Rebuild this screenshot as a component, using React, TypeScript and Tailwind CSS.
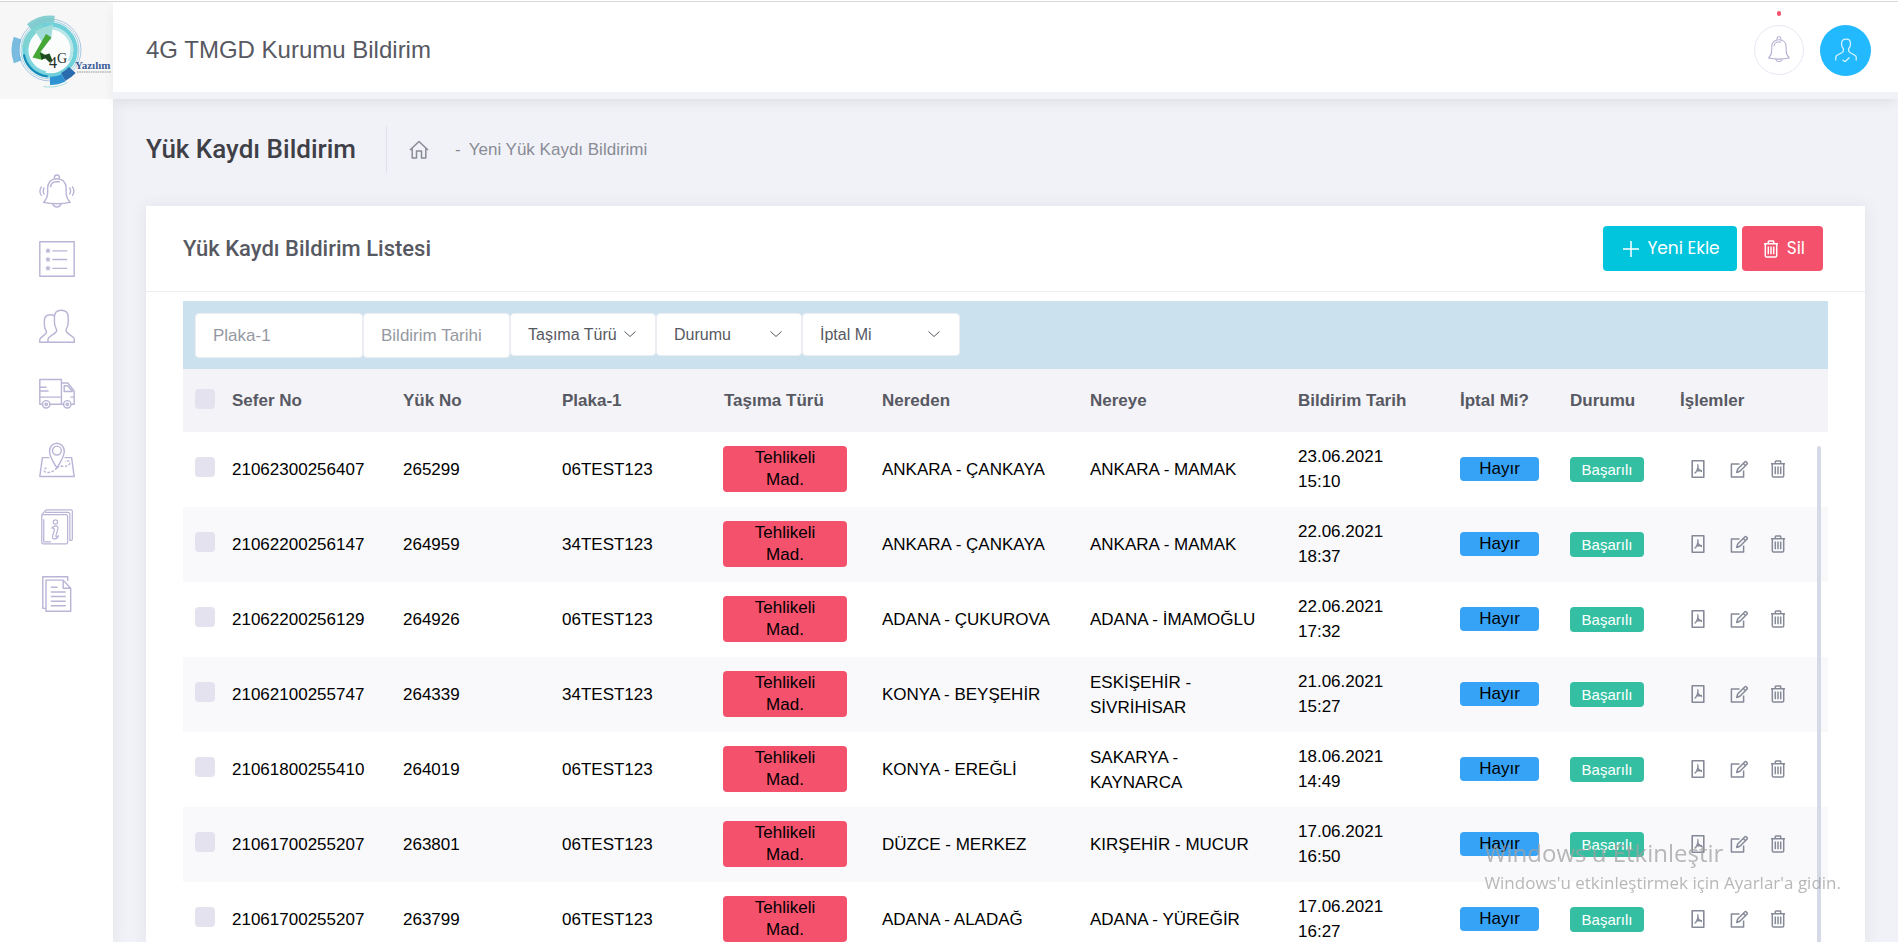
import React from "react";

type Row = {
  trip: string;
  load: string;
  plate: string;
  from: string;
  to: string;
  date: string;
  time: string;
};

const rows: Row[] = [
  { trip: "21062300256407", load: "265299", plate: "06TEST123", from: "ANKARA - ÇANKAYA", to: "ANKARA - MAMAK", date: "23.06.2021", time: "15:10" },
  { trip: "21062200256147", load: "264959", plate: "34TEST123", from: "ANKARA - ÇANKAYA", to: "ANKARA - MAMAK", date: "22.06.2021", time: "18:37" },
  { trip: "21062200256129", load: "264926", plate: "06TEST123", from: "ADANA - ÇUKUROVA", to: "ADANA - İMAMOĞLU", date: "22.06.2021", time: "17:32" },
  { trip: "21062100255747", load: "264339", plate: "34TEST123", from: "KONYA - BEYŞEHİR", to: "ESKİŞEHİR - SİVRİHİSAR", date: "21.06.2021", time: "15:27" },
  { trip: "21061800255410", load: "264019", plate: "06TEST123", from: "KONYA - EREĞLİ", to: "SAKARYA - KAYNARCA", date: "18.06.2021", time: "14:49" },
  { trip: "21061700255207", load: "263801", plate: "06TEST123", from: "DÜZCE - MERKEZ", to: "KIRŞEHİR - MUCUR", date: "17.06.2021", time: "16:50" },
  { trip: "21061700255207", load: "263799", plate: "06TEST123", from: "ADANA - ALADAĞ", to: "ADANA - YÜREĞİR", date: "17.06.2021", time: "16:27" },
];

const headings = ["Sefer No", "Yük No", "Plaka-1", "Taşıma Türü", "Nereden", "Nereye", "Bildirim Tarih", "İptal Mi?", "Durumu", "İşlemler"];

/* ---------- icons ---------- */

function Line({ size, box = 35, width = 1, children }: { size: string; box?: number; width?: number; children: React.ReactNode }) {
  return (
    <svg className={size} viewBox={`0 0 ${box} ${box}`} fill="none" stroke="currentColor" strokeWidth={width} strokeLinejoin="round" aria-hidden="true">
      {children}
    </svg>
  );
}

const bellBody = (
  <>
    <path d="M15 4.6V3.4a2.4 2.4 0 0 1 4.8 0v1.2" />
    <path d="M4.4 27.6c3.4-3.4 4-6 4-9.600V13.300C8.400 8 12 4.600 17.400 4.600S26.400 8 26.400 13.300V18c0 3.600.600 6.200 4 9.600-4.300.9-8.600 1.300-13 1.300s-8.700-.4-13-1.300Z" />
    <path d="M13.300 29.200c.7 1.900 2.200 2.800 4.100 2.800s3.400-.9 4.100-2.800" />
    <path d="M11.300 13c0-3.300 2.200-5.400 5.400-5.400h3.500" />
  </>
);

const BellRing = () => (
  <Line size="size-9" width={1.400}>
    {bellBody}
    <path d="M5.300 13.200c-1.600 1.600-1.600 5.200 0 6.800M2.700 12.200c-2.400 2.400-2.400 6.600 0 9M29.500 13.200c1.600 1.600 1.600 5.200 0 6.800M32.100 12.200c2.400 2.400 2.400 6.600 0 9" />
  </Line>
);

const ListBox = () => (
  <Line size="size-9" width={1.400}>
    <path d="M.8.800h33.400v33.400H.8zM13 9.600h14.500M13 18h14.500M13 26.600h14.500" />
    <path fill="currentColor" strokeWidth={0.500} d="m8.700 7 .7 1.500 1.700.2-1.200 1.100.3 1.600-1.500-.8-1.400.8.3-1.600-1.200-1.100 1.700-.2zM8.700 15.500l.7 1.500 1.700.2-1.200 1.100.3 1.600-1.500-.8-1.400.8.3-1.600-1.200-1.100 1.700-.2zM8.700 24.100l.7 1.500 1.700.2-1.200 1.100.3 1.600-1.500-.8-1.400.8.3-1.600-1.200-1.100 1.700-.2z" />
  </Line>
);

const Users = () => (
  <Line size="size-9" width={1.400}>
    <path d="M8.700 33.300v-2.500c0-3.500 6.700-5 8.300-8 .6-1.200 0-2.200-.6-3.200-1-1.600-1.400-3.200-1.400-6.400V8.800c0-4 2.200-6.600 6.700-6.600s6.700 2.600 6.700 6.600v4.400c0 3.200-.4 4.800-1.400 6.400-.6 1-1.200 2-.6 3.200 1.600 3 7.900 4.500 7.900 8v2.500Z" />
    <path d="M14.700 7.300c-1-.5-2.200-.7-3.400-.7-4 0-6.100 2.300-6.100 5.900v3.200c0 2.800.4 4.200 1.300 5.600.6 1 1.200 1.800.6 2.900C5.600 26.900.7 28.200.7 31.300v2h8" />
  </Line>
);

const Truck = () => (
  <Line size="size-9" width={1.400}>
    <path d="M4 28.500H.8V4.300h21v24.200M10 28.500h14M21.800 7.700H28l6.200 7.800v13h-3M.8 21.500h21M.8 12h6.500M.8 15.500h8.500M24.500 16V10.500h3.400l4.600 5.500zM30.500 21.500h3.700" />
    <circle cx="7" cy="28.500" r="3.600" />
    <circle cx="7" cy="28.500" r="1.100" />
    <circle cx="27.500" cy="28.500" r="3.600" />
    <circle cx="27.500" cy="28.500" r="1.100" />
  </Line>
);

const MapPin = () => (
  <Line size="size-9" width={1.400}>
    <path d="M17.400 25.200C14 20 10.200 13.400 10.200 9A7.200 7.800 0 0 1 24.600 9C24.600 13.400 20.800 20 17.400 25.200Z" />
    <circle cx="17.400" cy="8.300" r="4.300" />
    <path d="M10 15.200H3.300L.8 33.500h33.400l-2.500-18.300h-6.900" />
    <path strokeDasharray="2.600 1.400" d="M17.400 25.200c-2 2.200-5.500 4.600-9.400 4.600-3.600 0-4-3.800-.6-4.600M17.400 25.200c1-1.400 3-1.800 5-1.600 4 .4 7.600-.6 7.600-3.200s-3-2.300-4.600-1.400" />
  </Line>
);

const InfoBook = () => (
  <Line size="size-9" width={1.200}>
    <path d="M2.700 5.500h23.600a1.500 1.500 0 0 1 1.500 1.500v25.500a1.500 1.500 0 0 1-1.500 1.500H4.200a1.500 1.500 0 0 1-1.500-1.500ZM2.700 5.500 7 .8h24.200a1.200 1.200 0 0 1 1.200 1.200v27.500a1 1 0 0 1-1 1h-2M6 3.200h22a2 2 0 0 1 2 2V30M4.600 10v22h7" />
    <circle cx="16" cy="12.700" r="2.100" />
    <path d="M12.500 18.500c1.500-1.600 4-2.400 5.400-1.600.8.500.7 1.500.4 2.600l-1.800 6.300c-.4 1.500.6 1.600 2.300.2-.5 2-2.500 3.200-4.300 3-1.500-.2-1.600-1.500-1.200-3l1.700-5.800c.4-1.300-.9-1.300-2.500-1.700Z" />
  </Line>
);

const Documents = () => (
  <Line size="size-9" width={1.400}>
    <path d="M6.800 31.500H3.700V.8h24.200v4" />
    <path d="M6.800 4h16.700l7.300 8v22.200h-24zM23.500 4v8h7.300M11.500 11H18M11.500 15.500H26M11.500 20H26M11.500 24.500H26M11.500 29H26" />
  </Line>
);

const Trash = ({ size }: { size: string }) => (
  <Line size={size} box={18} width={1.500}>
    <path d="M2 3.700h14M6.300 3.500V1.700c0-.4.300-.7.700-.7h4c.4 0 .7.300.7.700v1.800M3.300 3.700v12c0 .8.500 1.300 1.300 1.300h8.800c.8 0 1.300-.5 1.300-1.300v-12M6.300 6.500v7.800M9 6.500v7.800M11.700 6.500v7.800" />
  </Line>
);

const Pdf = () => (
  <Line size="size-[18px]" box={18} width={1.600}>
    <path d="M3.200.8h11.600v16.400H3.200z" />
    <path strokeWidth={1.300} d="M8.300 4.500c.9 0 .9 2 .3 4S6.500 13 5.500 13.200M8.700 6c.2 2.600 1.600 4.800 4.300 5.600M6.500 11.500c2-.9 4-1.200 6.500-.9" />
  </Line>
);

const Edit = () => (
  <Line size="size-5" box={20} width={1.500}>
    <path d="M11.500 5H3.400v13h12.200v-6.600" />
    <path d="m8.700 13.500 1-3.500 7-7c.5-.5 1.200-.5 1.700 0l.5.5c.5.5.5 1.200 0 1.700l-7 7ZM15.300 4.500l2.200 2.200" />
  </Line>
);

const Plus = () => (
  <Line size="size-4" box={16} width={1.500}>
    <path d="M8 0v16M0 8h16" />
  </Line>
);

const Home = () => (
  <Line size="size-5" box={20} width={1.500}>
    <path d="M1 10 10 1.500 19 10M3.200 8.500V18h4.300v-7h5v7h4.300V8.500" />
  </Line>
);

const Chevron = () => (
  <svg className="pointer-events-none absolute top-[17px] right-5 h-2 w-3 text-[#575962]" viewBox="0 0 12 8" fill="none" stroke="currentColor" aria-hidden="true">
    <path d="m.5 1.500 5.500 5 5.500-5" />
  </svg>
);

function Arc({ r, start, len, width, color, opacity = 1 }: { r: number; start: number; len: number; width: number; color: string; opacity?: number }) {
  return (
    <circle cx="50" cy="48" r={r} fill="none" stroke={color} strokeWidth={width} strokeOpacity={opacity} pathLength={360} strokeDasharray={`${len} 360`} transform={`rotate(${start} 50 48)`} />
  );
}

const Logo = () => (
  <svg className="h-[97px] w-[113px]" viewBox="0 0 113 97" role="img" aria-label="4G Yazılım">
    <circle cx="50" cy="48" r="24" fill="#fbfdfd" />
    <Arc r={31} start={0} len={360} width={0.800} color="#7fa8cf" opacity={0.800} />
    <Arc r={29} start={0} len={360} width={0.800} color="#8cc7dc" />
    <Arc r={25.500} start={0} len={360} width={4.500} color="#6fd0da" />
    <Arc r={22} start={270} len={120} width={3} color="#b9e6e7" />
    <Arc r={23} start={100} len={130} width={3} color="#7fd6de" />
    <Arc r={26.500} start={95} len={75} width={2} color="#1287b8" />
    <Arc r={25} start={185} len={70} width={6} color="#7fd3cf" opacity={0.800} />
    <Arc r={31} start={228} len={50} width={7} color="#74c8cb" opacity={0.850} />
    <Arc r={34.500} start={160} len={40} width={8} color="#63b2dc" opacity={0.850} />
    <Arc r={30} start={42} len={22} width={9} color="#2a6cae" />
    <Arc r={31} start={64} len={26} width={8} color="#2d93d2" />
    <Arc r={37} start={62} len={38} width={1} color="#a7dfdc" />
    <path d="M35 29 53 22 51 38 46 35 42 40Z" fill="#9fdcda" />
    <path d="m46 32 5.500 3.500-11 14.500 5 3-3 5-10-2.500Z" fill="#46a636" />
    <path d="m40 50.500 4.500 2.500 5-1.500 3 7-3 2-4-4-4 1Z" fill="#1e4a22" />
    <text y="66" fill="#23302b" className="font-['Liberation_Serif',serif]">
      <tspan x="49" fontSize="16">4</tspan>
      <tspan x="57" y="61" fontSize="14">G</tspan>
    </text>
    <text x="75" y="67" fontSize="11" fontWeight="700" fill="#3c5d98" className="font-['Liberation_Serif',serif]">Yazılım</text>
    <path d="M77 70h34" stroke="#8d9a94" strokeWidth="1.200" strokeDasharray="1.600 .7" />
  </svg>
);

/* ---------- layout ---------- */

const menu = [
  { label: "Bildirimler", icon: <BellRing /> },
  { label: "Listeler", icon: <ListBox /> },
  { label: "Kullanıcılar", icon: <Users /> },
  { label: "Taşımalar", icon: <Truck /> },
  { label: "Harita", icon: <MapPin /> },
  { label: "Bilgi", icon: <InfoBook /> },
  { label: "Belgeler", icon: <Documents /> },
];

function Sidebar() {
  return (
    <aside className="z-10 flex w-[113px] shrink-0 flex-col bg-white shadow-[0_0_15px_1px_rgba(69,65,78,0.08)]">
      <a href="#" className="relative z-30 bg-[#f7f7f7]">
        <Logo />
      </a>
      <nav className="flex flex-col items-center gap-[31px] pt-[75px] text-[#b9b5d6]">
        {menu.map((m) => (
          <a key={m.label} href="#" aria-label={m.label}>
            {m.icon}
          </a>
        ))}
      </nav>
    </aside>
  );
}

function Header() {
  return (
    <header className="relative z-20 flex h-[97px] shrink-0 items-center justify-between border-b-[7px] border-[#f1f2f8] bg-white pt-[6px] pr-[27px] pl-[33px] shadow-[0_5px_12px_-3px_rgba(69,65,78,0.12)]">
      <span className="text-2xl text-[#575962]">4G TMGD Kurumu Bildirim</span>
      <div className="flex items-center gap-4">
        <button aria-label="Bildirimler" className="relative flex size-[50px] items-center justify-center rounded-full border border-[#e9e7f3] text-[#b3aed0]">
          <span className="absolute -top-[15px] left-[22px] h-[5px] w-1 rounded-full bg-[#f4516c]" />
          <Line size="size-7" width={1.300}>{bellBody}</Line>
        </button>
        <button aria-label="Profil" className="flex size-[51px] items-center justify-center rounded-full bg-[#22b9ff] text-[#d6f2ff]">
          <Line size="size-6" box={24} width={1.300}>
            <path d="M1.800 22.500v-3.200c0-.9.500-1.600 1.300-2l4.700-2.600c1-.6 1.600-1.300 1.600-2.500v-1.400C8.200 9.600 7.600 8.300 7.600 6.800V5c0-2.300 1.400-3.800 4.400-3.800S16.400 2.700 16.400 5v1.800c0 1.500-.6 2.800-1.800 4v1.400c0 1.200.6 1.900 1.600 2.500l4.700 2.600c.8.400 1.300 1.100 1.300 2v3.200M8.500 21.800l2.500 2 4.500-4.300" />
          </Line>
        </button>
      </div>
    </header>
  );
}

function Filter({ label, width }: { label: string; width: string }) {
  return (
    <div className={`relative ${width}`}>
      <select aria-label={label} className="h-[43px] w-full appearance-none rounded border border-[#ebedf2] bg-white pr-8 pl-[17px] text-base text-[#575962]">
        <option>{label}</option>
      </select>
      <Chevron />
    </div>
  );
}

const input = "h-[45px] rounded border border-[#ebedf2] bg-white px-[17px] text-[17px] text-[#575962] placeholder:text-[#9699a2]";
const check = "block size-5 appearance-none rounded bg-[#e5e2f0]";

export default function App() {
  return (
    <div className="flex h-screen overflow-hidden border-t border-white bg-[#f1f2f7] font-['Liberation_Sans',Arial,sans-serif]">
      <div className="flex min-w-0 flex-1 border-t border-[#d9dbdd]">
        <Sidebar />
        <div className="flex min-w-0 flex-1 flex-col">
          <Header />
          <main className="flex min-h-0 flex-1 flex-col px-[33px]">
            <div className="flex shrink-0 items-center pt-[27px] pb-[33px]">
              <h1 className="border-r border-[#e0e2ea] pr-[30px] font-[Roboto,sans-serif] text-[26px] leading-[47px] font-medium text-[#3f4047]">Yük Kaydı Bildirim</h1>
              <nav className="flex items-center text-[17px] text-[#898b96]">
                <a href="#" aria-label="Ana sayfa" className="ml-[22px]">
                  <Home />
                </a>
                <span className="ml-[26px]">-</span>
                <a href="#" className="ml-2">Yeni Yük Kaydı Bildirimi</a>
              </nav>
            </div>

            <section className="flex min-h-0 flex-1 flex-col bg-white shadow-[0_1px_15px_1px_rgba(69,65,78,0.08)]">
              <div className="flex h-[86px] shrink-0 items-center justify-between border-b border-[#ebedf2] pr-[42px] pl-[37px]">
                <h2 className="font-[Roboto,sans-serif] text-[22px] font-medium text-[#575962]">Yük Kaydı Bildirim Listesi</h2>
                <div className="flex gap-[5px] font-[Poppins,Lato,sans-serif] text-[17px] text-white">
                  <button className="flex h-[45px] items-center gap-2 rounded bg-[#00c5dc] pr-[17px] pl-5">
                    <Plus />
                    Yeni Ekle
                  </button>
                  <button className="flex h-[45px] items-center gap-[7px] rounded bg-[#f4516c] pr-[18px] pl-5">
                    <Trash size="size-[18px]" />
                    Sil
                  </button>
                </div>
              </div>

              <div className="relative min-h-0 flex-1 overflow-hidden px-[37px] pt-[9px]">
                <form className="flex h-[68px] items-start bg-[#cce1ee] px-3 pt-3">
                  <input aria-label="Plaka-1" placeholder="Plaka-1" className={`${input} w-[168px]`} />
                  <input aria-label="Bildirim Tarihi" placeholder="Bildirim Tarihi" className={`${input} w-[147px]`} />
                  <Filter label="Taşıma Türü" width="w-[146px]" />
                  <Filter label="Durumu" width="w-[146px]" />
                  <Filter label="İptal Mi" width="w-[158px]" />
                </form>

                <table className="w-full table-fixed text-left text-[17px] text-black">
                  <colgroup>
                    <col className="w-[37px]" />
                    <col className="w-[171px]" />
                    <col className="w-[159px]" />
                    <col className="w-[162px]" />
                    <col className="w-[158px]" />
                    <col className="w-[208px]" />
                    <col className="w-[208px]" />
                    <col className="w-[162px]" />
                    <col className="w-[110px]" />
                    <col className="w-[110px]" />
                    <col className="w-[160px]" />
                  </colgroup>
                  <thead>
                    <tr className="h-[63px] bg-[#f4f3f8] text-[#575962]">
                      <th className="pb-1 pl-3">
                        <input type="checkbox" aria-label="Tümünü seç" className={check} />
                      </th>
                      {headings.map((h) => (
                        <th key={h} className="pl-3 font-bold whitespace-nowrap">{h}</th>
                      ))}
                    </tr>
                  </thead>
                  <tbody>
                    {rows.map((r) => (
                      <tr key={r.load} className="h-[75px] even:bg-[#f9f9fc]">
                        <td className="pb-1.5 pl-3">
                          <input type="checkbox" aria-label={`${r.load} seç`} className={check} />
                        </td>
                        <td className="pl-3">{r.trip}</td>
                        <td className="pl-3">{r.load}</td>
                        <td className="pl-3">{r.plate}</td>
                        <td className="pb-px pl-[11px]">
                          <span className="block w-[124px] rounded bg-[#f4516c] px-4 py-px text-center leading-[22px]">Tehlikeli Mad.</span>
                        </td>
                        <td className="pl-3">{r.from}</td>
                        <td className="pr-6 pl-3 leading-[25px]">{r.to}</td>
                        <td className="pb-px pl-3 leading-[25px]">
                          {r.date}
                          <br />
                          {r.time}
                        </td>
                        <td className="pb-px pl-3">
                          <span className="block w-[79px] rounded bg-[#36a3f7] text-center leading-6">Hayır</span>
                        </td>
                        <td className="pl-3">
                          <span className="block w-[74px] rounded bg-[#34bfa3] text-center text-[15px] leading-[25px] text-white">Başarılı</span>
                        </td>
                        <td className="pb-px pl-[21px]">
                          <div className="flex items-center gap-[21px] text-[#868997]">
                            <button aria-label="PDF"><Pdf /></button>
                            <button aria-label="Düzenle"><Edit /></button>
                            <button aria-label="Sil"><Trash size="size-[18px]" /></button>
                          </div>
                        </td>
                      </tr>
                    ))}
                  </tbody>
                </table>
                <span className="absolute top-[154px] right-11 bottom-0 w-1 rounded-t bg-[#d6dae6]" />
              </div>
            </section>
          </main>
        </div>
      </div>

      <div className="pointer-events-none fixed right-[57px] bottom-[45px] z-20 font-['Open_Sans','Noto_Sans',sans-serif] text-[#a0a0a0]/75">
        <p className="text-2xl leading-8">Windows'u Etkinleştir</p>
        <p className="text-[17px] leading-7">Windows'u etkinleştirmek için Ayarlar'a gidin.</p>
      </div>
    </div>
  );
}
